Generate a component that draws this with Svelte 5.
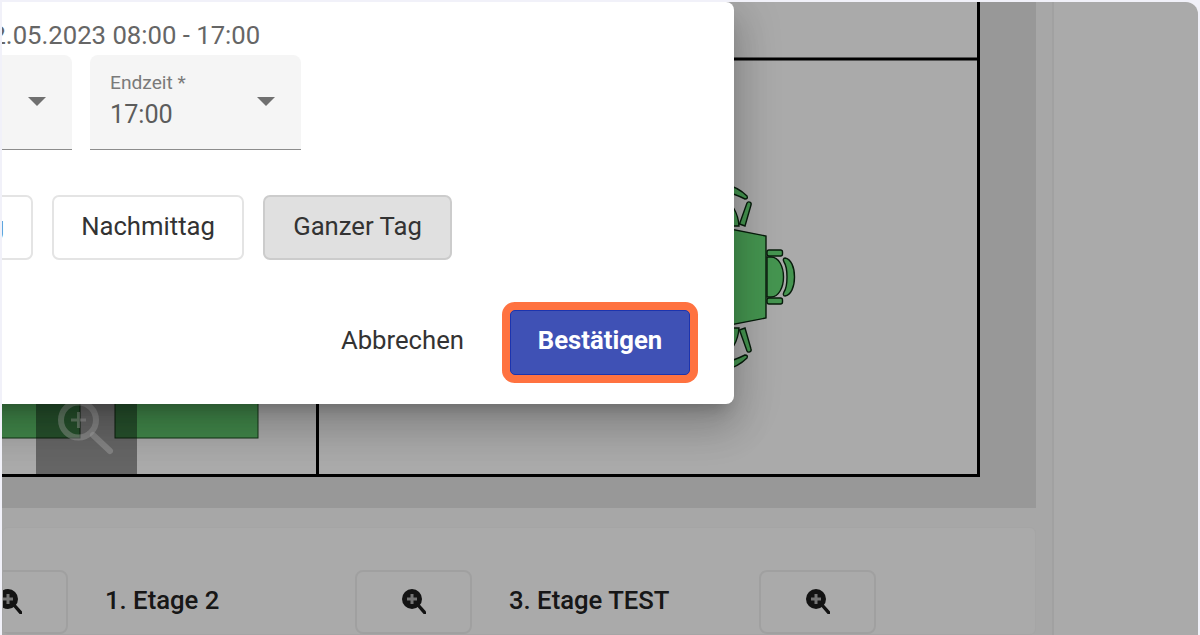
<script lang="ts">
  const levels = ['Erdgeschoss', '1. Etage 2', '3. Etage TEST'];
  const dayParts = [
    { name: 'Vormittag', active: false },
    { name: 'Nachmittag', active: false },
    { name: 'Ganzer Tag', active: true }
  ];
</script>

<div class="frame">
  <main class="main">
    <section class="plan">
      <svg class="plan__svg" viewBox="2 2 1034 506" width="1034" height="506">
        <rect x="2" y="2" width="977" height="473" fill="#fbfbfb" />
        <g class="desk">
          <rect x="-60" y="380" width="140" height="58" />
          <rect x="115" y="380" width="143" height="58" />
        </g>
        <g class="desk desk--bright">
          <path d="M720 227 L766 236 V318 L720 327 Z" />
          <!-- right chair -->
          <rect x="767" y="250" width="15.500" height="6" rx="2" />
          <rect x="767" y="298" width="15.500" height="6" rx="2" />
          <path d="M767 257 H771 C779 257 783.500 267 783.500 277 C783.500 287 779 297 771 297 H767 Z" />
          <path d="M785 258 C791 259 794.500 267 794.500 277 C794.500 287 791 295 785 296 C783 296 783 294 784 292 C788 286 788 268 784 262 C783 260 783 258 785 258 Z" />
          <!-- top chair -->
          <path d="M725 200 C731 202 738 212 739 226 H725 Z" />
          <path d="M739.500 224 L747 203 C748 201 752 202 751 205 L745 226 Z" />
          <path d="M725 184 C733 186 741 190 747 196 C748 198 747 199 745 199 C739 196 733 193 725 192 Z" />
          <!-- bottom chair -->
          <path d="M725 354 C731 352 738 342 739 328 H725 Z" />
          <path d="M739.500 330 L747 351 C748 353 752 352 751 349 L745 328 Z" />
          <path d="M725 370 C733 368 741 364 747 358 C748 356 747 355 745 355 C739 358 733 361 725 362 Z" />
        </g>
        <path class="walls" d="M2 475.500 H980 M978.500 2 V477 M318 59 H979 M317.500 380 V477" />
      </svg>
      <div class="plan__zoom">
        <svg viewBox="0 0 101 73" width="101" height="73">
          <circle cx="42.500" cy="16" r="17.500" />
          <path class="plan__handle" d="M57 31 L74 47" />
          <path class="plan__plus" d="M42.500 8 V24 M35 16 H50" />
        </svg>
      </div>
    </section>

    <section class="levels">
      {#each levels as level, i}
        <button class="levels__btn" aria-label="Zoom">
          <svg viewBox="0 0 24 25" width="24" height="25">
            <circle cx="10" cy="10" r="10" fill="#1c1c1c" />
            <path d="M16 16 L23 24" stroke="#1c1c1c" stroke-width="3.400" stroke-linecap="round" />
            <path d="M10 5 V15 M5 10 H15" stroke="#ababab" stroke-width="3" />
          </svg>
        </button>
        {#if i < levels.length - 1}
          <span class="levels__name">{levels[i + 1]}</span>
        {/if}
      {/each}
    </section>
  </main>
  <aside class="side"></aside>

  <div class="backdrop"></div>

  <div class="dialog">
    <div class="dialog__date">12.05.2023 08:00 - 17:00</div>
    <div class="dialog__fields">
      <div class="select">
        <div class="select__text">
          <span class="select__label">Startzeit *</span>
          <span class="select__value">08:00</span>
        </div>
        <i class="select__arrow"></i>
      </div>
      <div class="select">
        <div class="select__text">
          <span class="select__label">Endzeit *</span>
          <span class="select__value">17:00</span>
        </div>
        <i class="select__arrow"></i>
      </div>
    </div>
    <div class="dialog__parts">
      {#each dayParts as part}
        <button class="part" class:part--active={part.active}>{part.name}</button>
      {/each}
    </div>
    <div class="dialog__actions">
      <button class="cancel">Abbrechen</button>
      <button class="confirm">Bestätigen</button>
    </div>
  </div>
</div>

<style>
  :global(body) {
    background: #f1f1f9;
    font-family: Roboto, "Liberation Sans", sans-serif;
    overflow: hidden;
  }

  button {
    font-family: inherit;
  }

  .frame {
    position: relative;
    display: flex;
    height: 633px;
    margin: 2px 2px 0 2px;
    background: #f7f7f7;
    border-top-right-radius: 12px;
    overflow: hidden;
  }

  .main {
    flex: 0 0 1034px;
    min-width: 0;
    display: flex;
    flex-direction: column;
  }

  .plan {
    position: relative;
    height: 506px;
    background: #e1e1e1;
    flex: none;
  }

  .plan__svg {
    display: block;
  }

  .desk {
    fill: #60c76d;
    stroke: #1d4a22;
    stroke-width: 1;
  }

  .desk--bright {
    fill: #66dc76;
    stroke: #0c2a12;
    stroke-width: 1.400;
  }

  .walls {
    fill: none;
    stroke: #000;
    stroke-width: 3;
  }

  .plan__zoom {
    position: absolute;
    left: 34px;
    top: 402px;
    width: 101px;
    height: 73px;
    background: rgba(0, 0, 0, 0.4);
  }

  .plan__zoom svg {
    display: block;
    fill: none;
    stroke: rgba(255, 255, 255, 0.42);
    stroke-width: 6;
  }

  .plan__handle {
    stroke-linecap: round;
  }

  .plan__plus {
    stroke-width: 3;
  }

  .levels {
    flex: none;
    display: flex;
    align-items: flex-start;
    gap: 37px;
    height: 108px;
    margin-top: 19px;
    padding: 42px 0 0 0;
    box-sizing: border-box;
    background: #fbfbfb;
    border: 1px solid #f3f3f3;
    border-radius: 6px;
    overflow: hidden;
  }

  .levels__btn {
    flex: none;
    display: flex;
    align-items: center;
    justify-content: center;
    width: 117px;
    height: 64px;
    padding: 0 0 2px;
    background: transparent;
    border: 2px solid #ececec;
    border-radius: 8px;
  }

  .levels__btn:first-child {
    margin-left: -52px;
  }

  .levels__name {
    flex: none;
    width: 213px;
    font-size: 25.700px;
    font-weight: 500;
    line-height: 60px;
    color: #222;
  }

  .side {
    flex: 1;
    margin-left: 16px;
    background: #fbfbfb;
    border-left: 2px solid #eeeeee;
  }

  .backdrop {
    position: absolute;
    inset: 0;
    background: rgba(0, 0, 0, 0.32);
  }

  .dialog {
    position: absolute;
    left: -172px;
    top: 0;
    width: 904px;
    height: 402px;
    padding: 0 0 0 23px;
    box-sizing: border-box;
    background: #fff;
    border-radius: 8px;
    box-shadow:
      0 11px 15px -7px rgba(0, 0, 0, 0.2),
      0 24px 38px 3px rgba(0, 0, 0, 0.14),
      0 9px 46px 8px rgba(0, 0, 0, 0.12);
  }

  .dialog__date {
    margin-left: 124px;
    padding-top: 19px;
    font-size: 25.700px;
    line-height: 28px;
    color: #666;
  }

  .dialog__fields {
    display: flex;
    gap: 18px;
    margin: 6px 0 0 8px;
  }

  .select {
    flex: none;
    position: relative;
    width: 211px;
    height: 95px;
    box-sizing: border-box;
    padding: 16px 20px 0;
    background: #f5f5f5;
    border-bottom: 1.500px solid #8c8c8c;
    border-radius: 8px 8px 0 0;
  }

  .select__text {
    display: flex;
    flex-direction: column;
  }

  .select__label {
    font-size: 19.200px;
    line-height: 24px;
    color: #7a7a7a;
  }

  .select__value {
    font-size: 25.200px;
    line-height: 40px;
    color: #5c5c5c;
  }

  .select__arrow {
    position: absolute;
    right: 26px;
    top: 42px;
    border-left: 9px solid transparent;
    border-right: 9px solid transparent;
    border-top: 9px solid #707070;
  }

  .dialog__parts {
    display: flex;
    gap: 19px;
    margin: 45px 0 0 9px;
  }

  .part {
    flex: none;
    height: 65px;
    padding: 0 27px 3px;
    font-size: 25.700px;
    color: #333;
    background: #fff;
    border: 2px solid #e4e4e4;
    border-radius: 7px;
  }

  .part--active {
    min-width: 189px;
    background: #e0e0e0;
    border-color: #cccccc;
  }

  .dialog__actions {
    display: flex;
    align-items: center;
    justify-content: flex-end;
    gap: 46px;
    margin: 50px 44px 0 0;
  }

  .cancel {
    padding: 0 0 6px;
    font-size: 25.700px;
    color: #333;
    background: none;
    border: none;
  }

  .confirm {
    width: 180px;
    height: 65px;
    padding: 0 0 5px;
    font-size: 25.700px;
    font-weight: 700;
    color: #fff;
    background: #3f51b5;
    border: 1px solid #1c34ae;
    border-radius: 5px;
    box-shadow: 0 0 0 8px #ff7240;
  }
</style>
